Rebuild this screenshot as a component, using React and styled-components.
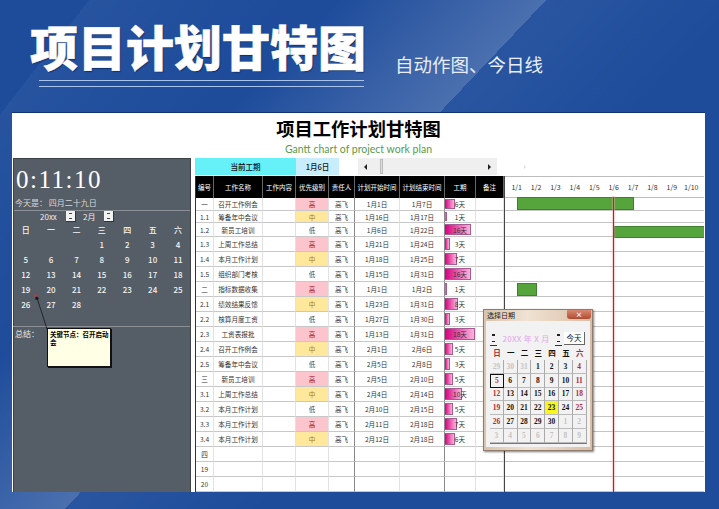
import React from 'react'
import styled, { createGlobalStyle } from 'styled-components'

const rows = [
  ['一', '召开工作例会', '高', '1月1日', '1月7日', 6],
  ['1.1', '筹备年中会议', '中', '1月16日', '1月17日', 1],
  ['1.2', '新员工培训', '低', '1月6日', '1月22日', 16],
  ['1.3', '上周工作总结', '高', '1月21日', '1月24日', 3],
  ['1.4', '本月工作计划', '中', '1月18日', '1月25日', 7],
  ['1.5', '组织部门考核', '低', '1月15日', '1月31日', 16],
  ['二', '指标数据收集', '高', '1月1日', '1月2日', 1],
  ['2.1', '绩效结果反馈', '中', '1月23日', '1月31日', 8],
  ['2.2', '核算月度工资', '低', '1月27日', '1月30日', 3],
  ['2.3', '工资表报批', '高', '1月13日', '1月31日', 18],
  ['2.4', '召开工作例会', '中', '2月1日', '2月6日', 5],
  ['2.5', '筹备年中会议', '低', '2月5日', '2月8日', 3],
  ['三', '新员工培训', '高', '2月5日', '2月10日', 5],
  ['3.1', '上周工作总结', '中', '2月4日', '2月14日', 10],
  ['3.2', '本月工作计划', '低', '2月10日', '2月15日', 5],
  ['3.3', '本月工作计划', '高', '2月11日', '2月18日', 7],
  ['3.4', '本月工作计划', '中', '2月12日', '2月18日', 6],
  ['四'],
  ['19'],
  ['20'],
]

const heights = [13, 12, 14, ...Array(17).fill(15)]
const headings = ['编号', '工作名称', '工作内容', '优先级别', '责任人', '计划开始时间', '计划结束时间', '工期', '备注']
const widths = [18, 49, 33, 33, 26, 45, 45, 31, 28]
const weekdays = ['日', '一', '二', '三', '四', '五', '六']
const DAY = 19.4
const FIRST = 11.6

const sideDays = [
  ['', '', '', 1, 2, 3, 4],
  [5, 6, 7, 8, 9, 10, 11],
  [12, 13, 14, 15, 16, 17, 18],
  [19, 20, 21, 22, 23, 24, 25],
  [26, 27, 28, '', '', '', ''],
]

const pickerDays = [
  [29, 30, 31, 1, 2, 3, 4],
  [5, 6, 7, 8, 9, 10, 11],
  [12, 13, 14, 15, 16, 17, 18],
  [19, 20, 21, 22, 23, 24, 25],
  [26, 27, 28, 29, 30, 1, 2],
  [3, 4, 5, 6, 7, 8, 9],
]

const GlobalStyle = createGlobalStyle`
  body {
    margin: 0;
    font-family: "Noto Sans CJK SC", "Liberation Sans", sans-serif;
  }
`

const Page = styled.div`
  width: 719px;
  height: 509px;
  overflow: hidden;
  background-color: #1e4c9b;
  background-image:
    linear-gradient(133.4deg, transparent 28%, rgba(255, 255, 255, 0.2) 45.5%, rgba(255, 255, 255, 0.05) 45.5%, transparent 62%),
    linear-gradient(128deg, transparent 8%, rgba(255, 255, 255, 0.04) 8%, transparent 26%);
`

const Header = styled.header`
  height: 112px;
  box-sizing: border-box;
  padding: 13px 0 0 30px;
  display: flex;
  align-items: flex-start;
  color: #fff;
`

const TitleBlock = styled.div`
  width: 334px;
`

const BigTitle = styled.h1`
  margin: 0;
  font-size: 48px;
  line-height: 64px;
  font-weight: 900;
  white-space: nowrap;
  -webkit-text-stroke: 0.5px #fff;
  text-shadow: 1px 1px 1px #0c2c66;
`

const DoubleRule = styled.div`
  margin: 3px 0 0 9px;
  height: 3px;
  border-top: 1px solid #a9c3ea;
  border-bottom: 1px solid #a9c3ea;
  padding-top: 2px;
  box-sizing: content-box;
`

const Tagline = styled.div`
  margin: 37px 0 0 31px;
  font-size: 18.5px;
  line-height: 28px;
  color: #e8eef8;
  white-space: nowrap;
`

const Sheet = styled.main`
  margin-left: 12px;
  width: 693px;
  height: 380px;
  box-sizing: border-box;
  background: #fff;
  border-top: 1px solid #10346f;
  overflow: hidden;
`

const SheetTitle = styled.div`
  height: 45px;
  text-align: center;
`

const SheetHeading = styled.h2`
  margin: 0;
  padding: 2px 0 1px;
  font-size: 18.3px;
  line-height: 26px;
  font-weight: 700;
  color: #000;
`

const SheetSub = styled.div`
  font-family: "Lato", "Liberation Sans", sans-serif;
  font-size: 10.5px;
  line-height: 14px;
  color: #5a9a48;
`

const Body = styled.div`
  display: flex;
  height: 334px;
  padding-left: 1px;
`

const Side = styled.aside`
  position: relative;
  width: 178px;
  flex: none;
  box-sizing: border-box;
  background: #555d66;
  border-top: 1px solid #3c4248;
  border-left: 1px solid #3c4248;
  border-right: 1px solid #3c4248;
  color: #f0f0f0;
`

const Clock = styled.div`
  height: 37px;
  padding: 6px 0 0 2px;
  box-sizing: border-box;
  font-family: "Liberation Serif", serif;
  font-size: 25px;
  line-height: 30px;
  letter-spacing: 1.5px;
  color: #fff;
`

const Today = styled.div`
  height: 14px;
  padding-left: 1px;
  font-size: 8px;
  line-height: 14px;
  color: #d8d8d8;
  border-bottom: 1px solid #8b9096;
`

const MonthBar = styled.div`
  display: flex;
  align-items: center;
  height: 11px;
  padding-left: 26px;
  font-size: 8px;
  color: #eee;
`

const MonthLabel = styled.span`
  width: ${p => p.$w}px;
  white-space: nowrap;
`

const SideSpinner = styled.span`
  width: 10px;
  height: 11px;
  margin-right: 7px;
  background: #f2f2f2;
  border-right: 1px solid #333;
  border-bottom: 1px solid #333;
  box-sizing: border-box;
  display: grid;
  grid-template-rows: 1fr 1fr;
  justify-items: center;
  align-items: center;
  &::before,
  &::after {
    content: '';
    width: 3px;
    height: 1px;
    background: #444;
  }
`

const SideGrid = styled.div`
  display: grid;
  grid-template-columns: repeat(7, 25.4px);
  grid-auto-rows: 15px;
  margin-left: -1px;
  height: 104px;
  border-bottom: 1px solid #8b9096;
`

const SideCell = styled.span`
  display: flex;
  align-items: center;
  justify-content: center;
  font-size: 8px;
  font-weight: 500;
  color: #f4f4f4;
`

const SummaryLabel = styled.div`
  padding: 1px 0 0 1px;
  font-size: 8px;
  line-height: 12px;
  color: #e8e8e8;
`

const Note = styled.div`
  position: absolute;
  left: 33px;
  top: 169px;
  width: 64px;
  height: 39px;
  box-sizing: border-box;
  padding: 1px 0 1px 2px;
  background: #ffffe6;
  border: 1px solid #111;
  box-shadow: 1px 1px 0 #111;
  font-size: 6.5px;
  line-height: 8px;
  font-weight: 700;
  color: #000;
`

const NoteArrow = styled.svg`
  position: absolute;
  left: 18px;
  top: 134px;
`

const Main = styled.div`
  margin-left: 4px;
  width: 509px;
  flex: none;
`

const Strip = styled.div`
  display: flex;
  align-items: stretch;
  height: 17px;
  margin-bottom: 1px;
  font-size: 7.5px;
  color: #111;
`

const StripCell = styled.div`
  width: ${p => p.$w}px;
  background: ${p => p.$bg};
  display: flex;
  align-items: center;
  justify-content: center;
  font-weight: 500;
`

const Scroller = styled.div`
  position: relative;
  margin-left: 19px;
  width: 139px;
  background: #efefef;
  display: flex;
  align-items: center;
  justify-content: space-between;
  padding: 0 6px;
  box-sizing: border-box;
  &::after {
    content: '';
    position: absolute;
    left: 22px;
    top: 1px;
    width: 3px;
    height: 15px;
    background: #dcdcdc;
    border: 1px solid #bbb;
    box-sizing: border-box;
  }
`

const Caret = styled.span`
  width: 0;
  height: 0;
  border-top: 3px solid transparent;
  border-bottom: 3px solid transparent;
  ${p => (p.$right ? 'border-left: 3px solid #222;' : 'border-right: 3px solid #222;')}
`

const FaintCaret = styled.span`
  align-self: center;
  margin-left: 27px;
  width: 0;
  height: 0;
  border-top: 2px solid transparent;
  border-bottom: 2px solid transparent;
  border-left: 2px solid #ddd;
`

const Grid = styled.div`
  position: relative;
  display: flex;
`

const Table = styled.div`
  width: 309px;
  flex: none;
  border-left: 1px solid #333;
  box-sizing: border-box;
`

const HeadRow = styled.div`
  display: flex;
  height: 22px;
  background: #000;
`

const HeadCell = styled.div`
  width: ${p => p.$w}px;
  flex: none;
  box-sizing: border-box;
  display: flex;
  align-items: center;
  justify-content: center;
  font-size: 6.5px;
  color: #fff;
  white-space: nowrap;
  border-right: 1px solid #666;
`

const Row = styled.div`
  display: flex;
  height: ${p => p.$h}px;
`

const Cell = styled.div`
  width: ${p => p.$w}px;
  flex: none;
  box-sizing: border-box;
  position: relative;
  display: flex;
  align-items: center;
  justify-content: center;
  font-size: 6.6px;
  color: #333;
  white-space: nowrap;
  background: ${p => p.$bg || '#fff'};
  border-bottom: 1px solid #c8c8c8;
  border-right: 1px solid ${p => (p.$strong ? '#8a8a8a' : '#e2e2e2')};
`

const Priority = styled.span`
  color: ${p => p.$c};
`

const priorityStyle = {
  高: { bg: '#fcc4cc', c: '#a02030' },
  中: { bg: '#ffe89c', c: '#a87a10' },
  低: { bg: '#fff', c: '#444' },
}

const DataBar = styled.span`
  position: absolute;
  left: 0;
  top: 1px;
  bottom: 1px;
  box-sizing: border-box;
  background: linear-gradient(90deg, #d6007f, #f9b4da);
  border: 1px solid #a85a94;
  border-left: none;
`

const DataText = styled.span`
  position: relative;
`

const Chart = styled.div`
  position: relative;
  width: 200px;
  flex: none;
  overflow: hidden;
  border-left: 1px solid #444;
  box-sizing: border-box;
`

const Axis = styled.div`
  position: relative;
  height: 22px;
  box-sizing: border-box;
  border-top: 1px solid #bdbdbd;
  border-bottom: 1px solid #bdbdbd;
  display: flex;
  padding-left: 2px;
`

const AxisLabel = styled.span`
  width: 19.4px;
  flex: none;
  text-align: center;
  font-size: 7px;
  line-height: 21px;
  color: #333;
  white-space: nowrap;
`

const ChartRow = styled.div`
  position: relative;
  height: ${p => p.$h}px;
  box-sizing: border-box;
  border-bottom: 1px solid #c4c4c4;
`

const GanttBar = styled.span`
  position: absolute;
  bottom: ${p => p.$bottom}px;
  height: ${p => p.$height}px;
  box-sizing: border-box;
  background: #55a53c;
  border: 1px solid #437f32;
`

const TodayLine = styled.div`
  position: absolute;
  left: ${FIRST + 5 * DAY - 0.5}px;
  top: 21px;
  bottom: 0;
  width: 1px;
  background: #a52a2a;
  box-shadow: 0 0 1px 1px rgba(240, 160, 160, 0.5);
`

const Picker = styled.div`
  position: absolute;
  left: 288px;
  top: 133px;
  width: 110px;
  height: 142px;
  box-sizing: border-box;
  background: linear-gradient(90deg, #d9c3ab, #f0e2d2 40%, #d8bea6);
  border: 1px solid #8c7d70;
  box-shadow: 1px 1px 2px rgba(0, 0, 0, 0.5);
  padding: 0 2px 3px;
  display: flex;
  flex-direction: column;
`

const PickerTitle = styled.div`
  position: relative;
  height: 11px;
  flex: none;
  font-size: 7px;
  line-height: 11px;
  padding-left: 1px;
  color: #222;
`

const CloseButton = styled.span`
  position: absolute;
  right: -1px;
  top: 0;
  width: 24px;
  height: 9px;
  background: linear-gradient(#d98a70, #b04a30);
  border-radius: 0 0 3px 3px;
  color: #fff;
  font-size: 7px;
  line-height: 8px;
  text-align: center;
  font-weight: 700;
`

const PickerBody = styled.div`
  flex: 1;
  background: #f3f2f2;
  padding: 11px 0 0 4px;
`

const PickerTop = styled.div`
  display: flex;
  align-items: center;
  height: 13px;
`

const PickerSpinner = styled.span`
  width: 7px;
  height: 13px;
  display: grid;
  grid-template-rows: 1fr 1fr;
  justify-items: center;
  align-items: center;
  border-bottom: 1px solid #333;
  &::before,
  &::after {
    content: '';
    width: 3px;
    height: 1.5px;
    background: #222;
  }
`

const PickerMonth = styled.span`
  width: 58px;
  text-align: center;
  font-size: 8px;
  letter-spacing: 0.3px;
  color: #e2a4ea;
  white-space: nowrap;
`

const TodayButton = styled.span`
  margin-left: 2px;
  width: 21px;
  height: 13px;
  box-sizing: border-box;
  background: #fff;
  border-right: 1px solid #666;
  border-bottom: 1px solid #666;
  font-size: 7.5px;
  line-height: 12px;
  text-align: center;
  color: #111;
`

const PickerWeek = styled.div`
  display: grid;
  grid-template-columns: repeat(7, 13.8px);
  height: 15px;
  align-items: center;
  justify-items: center;
  font-size: 7.5px;
  font-weight: 700;
`

const PickerGrid = styled.div`
  display: grid;
  grid-template-columns: repeat(7, 13.8px);
  grid-auto-rows: 13.8px;
  border-bottom: 1px solid #777;
  width: max-content;
`

const PickerCell = styled.span`
  box-sizing: border-box;
  display: flex;
  align-items: center;
  justify-content: center;
  font-family: "Liberation Serif", serif;
  font-size: 7.5px;
  font-weight: 700;
  color: ${p => p.$c};
  background: ${p => (p.$today ? '#f7f71e' : 'transparent')};
  border: ${p => (p.$picked ? '1px solid #111' : 'none')};
  border-right: 1px solid ${p => (p.$picked ? '#111' : '#aaa')};
  border-bottom: 1px solid ${p => (p.$picked ? '#111' : '#bbb')};
`

const dayColor = (col, outside) => {
  if (outside) return '#c4c4c4'
  return col === 0 || col === 6 ? '#b02a3a' : '#111'
}

const Gantt = ({ row }) => {
  const match = row[3] && row[3].match(/^1月(\d+)日/)
  if (!match || Number(match[1]) > 10) return null
  const start = Number(match[1])
  const isLate = start === 6
  return (
    <GanttBar
      $height={isLate ? 12 : 13}
      $bottom={isLate ? -2 : 0}
      style={{ left: FIRST + (start - 1) * DAY, width: row[5] * DAY + 1 }}
    />
  )
}

const App = () => (
  <Page>
    <GlobalStyle />
    <Header>
      <TitleBlock>
        <BigTitle>项目计划甘特图</BigTitle>
        <DoubleRule />
      </TitleBlock>
      <Tagline>自动作图、今日线</Tagline>
    </Header>
    <Sheet>
      <SheetTitle>
        <SheetHeading>项目工作计划甘特图</SheetHeading>
        <SheetSub>Gantt chart of project work plan</SheetSub>
      </SheetTitle>
      <Body>
        <Side>
          <Clock>0:11:10</Clock>
          <Today>今天是： 四月二十九日</Today>
          <MonthBar>
            <MonthLabel $w={26}>20xx</MonthLabel>
            <SideSpinner />
            <MonthLabel $w={21}>2月</MonthLabel>
            <SideSpinner />
          </MonthBar>
          <SideGrid>
            {weekdays.map(d => <SideCell key={d}>{d}</SideCell>)}
            {sideDays.flat().map((d, i) => <SideCell key={i}>{d}</SideCell>)}
          </SideGrid>
          <SummaryLabel>总结：</SummaryLabel>
          <NoteArrow width="20" height="40" viewBox="0 0 20 40">
            <line x1="15" y1="36" x2="5" y2="5" stroke="#14181c" strokeWidth="0.8" />
            <path d="M3.6 1.5 L7 6 L3.4 7 Z" fill="#14181c" />
            <circle cx="3.5" cy="2.5" r="1.6" fill="#b04050" />
          </NoteArrow>
          <Note>关键节点：召开启动会</Note>
        </Side>
        <Main>
          <Strip>
            <StripCell $w={101} $bg="#66f0f8">当前工期</StripCell>
            <StripCell $w={43} $bg="#c8eefe">1月6日</StripCell>
            <Scroller>
              <Caret />
              <Caret $right />
            </Scroller>
            <FaintCaret />
          </Strip>
          <Grid>
            <Table>
              <HeadRow>
                {headings.map((h, i) => <HeadCell key={h} $w={widths[i]}>{h}</HeadCell>)}
              </HeadRow>
              {rows.map((r, i) => {
                const pr = priorityStyle[r[2]]
                return (
                  <Row key={i} $h={heights[i]}>
                    <Cell $w={widths[0]}>{r[0]}</Cell>
                    <Cell $w={widths[1]}>{r[1]}</Cell>
                    <Cell $w={widths[2]} />
                    <Cell $w={widths[3]} $bg={pr && pr.bg}>
                      {pr && <Priority $c={pr.c}>{r[2]}</Priority>}
                    </Cell>
                    <Cell $w={widths[4]} $strong>{r[1] && '高飞'}</Cell>
                    <Cell $w={widths[5]}>{r[3]}</Cell>
                    <Cell $w={widths[6]} $strong>{r[4]}</Cell>
                    <Cell $w={widths[7]}>
                      {r[5] && <DataBar style={{ width: r[5] * 1.65 }} />}
                      {r[5] && <DataText>{r[5]}天</DataText>}
                    </Cell>
                    <Cell $w={widths[8]} />
                  </Row>
                )
              })}
            </Table>
            <Chart>
              <Axis>
                {Array.from({ length: 10 }, (_, i) => <AxisLabel key={i}>1/{i + 1}</AxisLabel>)}
              </Axis>
              {rows.map((r, i) => (
                <ChartRow key={i} $h={heights[i]}>
                  <Gantt row={r} />
                </ChartRow>
              ))}
              <TodayLine />
            </Chart>
            <Picker>
              <PickerTitle>
                选择日期
                <CloseButton>×</CloseButton>
              </PickerTitle>
              <PickerBody>
                <PickerTop>
                  <PickerSpinner />
                  <PickerMonth>20XX 年 X 月</PickerMonth>
                  <PickerSpinner />
                  <TodayButton>今天</TodayButton>
                </PickerTop>
                <PickerWeek>
                  {weekdays.map((d, i) => (
                    <span key={d} style={{ color: dayColor(i, false) }}>{d}</span>
                  ))}
                </PickerWeek>
                <PickerGrid>
                  {pickerDays.map((week, w) => week.map((d, i) => {
                    const outside = (w === 0 && d > 20) || (w >= 4 && d < 20)
                    return (
                      <PickerCell
                        key={`${w}-${i}`}
                        $c={dayColor(i, outside)}
                        $today={!outside && d === 23}
                        $picked={!outside && d === 5}
                      >
                        {d}
                      </PickerCell>
                    )
                  }))}
                </PickerGrid>
              </PickerBody>
            </Picker>
          </Grid>
        </Main>
      </Body>
    </Sheet>
  </Page>
)

export default App
